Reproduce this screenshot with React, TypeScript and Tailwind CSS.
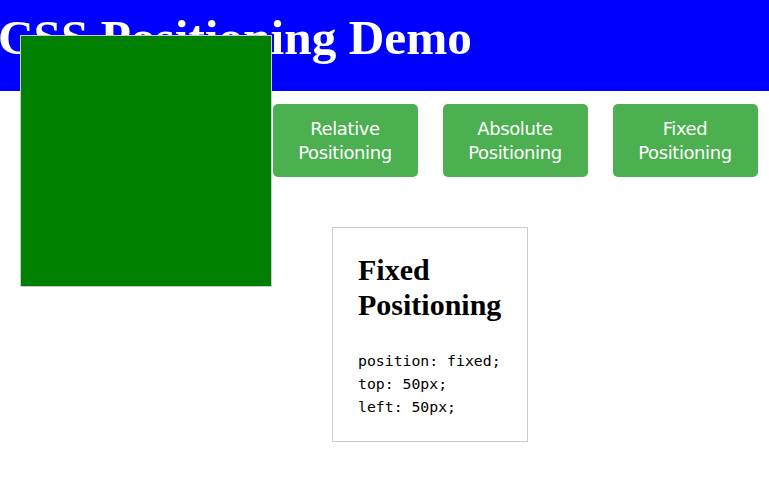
const buttons = ['Static Positioning', 'Relative Positioning', 'Absolute Positioning', 'Fixed Positioning'];

export default function App() {
  return (
    <div className="relative min-h-[477px] bg-white overflow-hidden">
      {/* header */}
      <header className="h-[91px] bg-[#0000ff] overflow-hidden">
        <h1 className="pt-[10px] -ml-[2px] font-['Liberation_Serif',serif] text-[49.3px] font-bold leading-[1.15] text-white whitespace-nowrap">
          CSS Positioning Demo
        </h1>
      </header>

      <main className="pl-[91px]">
        <nav className="mt-[13px] flex justify-center gap-[25px]">
          {buttons.map((b) => (
            <button
              key={b}
              className="w-[145px] h-[73px] rounded-[5px] bg-[#4caf50] text-white font-['DejaVu_Sans',sans-serif] text-[18px] leading-[24px] tracking-[-0.4px]"
            >
              {b.split(' ')[0]}
              <br />
              {b.split(' ')[1]}
            </button>
          ))}
        </nav>

        <div className="mt-[50px] flex justify-center">
          <div className="w-[196px] border border-[#cccccc] p-[25px] pb-[23px]">
            <h2 className="font-['Liberation_Serif',serif] text-[30px] font-bold leading-[1.15] text-black">
              Fixed Positioning
            </h2>
            <pre className="mt-[27px] font-['DejaVu_Sans_Mono',monospace] text-[14.8px] leading-[23px] text-black">
              {'position: fixed;\ntop: 50px;\nleft: 50px;'}
            </pre>
          </div>
        </div>
      </main>

      {/* the fixed demo box */}
      <div className="absolute left-[20px] top-[35px] w-[252px] h-[252px] bg-[#008000] border border-[#cccccc]" />
    </div>
  );
}
